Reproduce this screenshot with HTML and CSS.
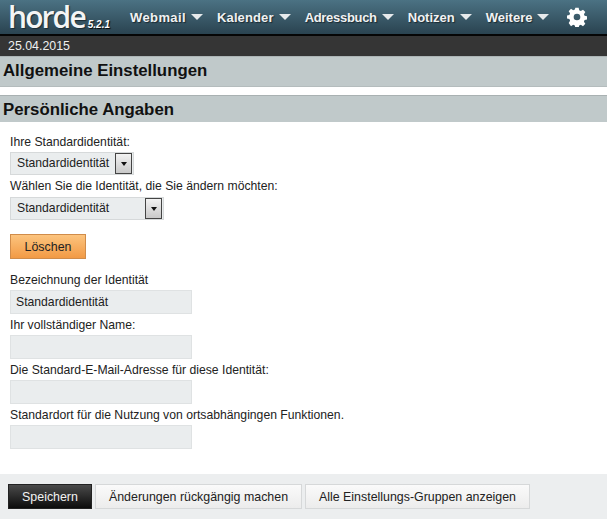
FILE: index.html
```html
<!DOCTYPE html>
<html lang="de">
<head>
<meta charset="utf-8">
<title>Allgemeine Einstellungen</title>
<link rel="stylesheet" href="styles.css">
</head>
<body>
<header class="topbar">
  <div class="logo"><span class="logo-word">horde</span><span class="logo-version">5.2.1</span></div>
  <nav class="menu">
    <a class="menu-item menu-wide">Webmail<i class="caret"></i></a>
    <a class="menu-item menu-slight">Kalender<i class="caret"></i></a>
    <a class="menu-item menu-tight">Adressbuch<i class="caret"></i></a>
    <a class="menu-item">Notizen<i class="caret"></i></a>
    <a class="menu-item">Weitere<i class="caret"></i></a>
  </nav>
  <svg class="gear" viewBox="0 0 24 24" width="20" height="20"><path fill="#fff" fill-rule="evenodd" d="M10 1h4l.6 3 2 .9 2.6-1.700 2.800 2.800-1.700 2.600.8 2 3 .6v3.800l-3 .6-.8 2 1.700 2.600-2.800 2.800-2.600-1.700-2 .9-.6 3h-4l-.6-3-2-.9-2.600 1.700L2 19.100l1.700-2.600-.8-2-3-.6v-3.800l3-.6.8-2L2 5l2.800-2.800 2.600 1.700 2-.9zM12 8a4 4 0 1 0 0 8 4 4 0 0 0 0-8z"/></svg>
</header>
<div class="datebar">25.04.2015</div>
<h1 class="band band-main">Allgemeine Einstellungen</h1>
<h2 class="band band-sub">Persönliche Angaben</h2>
<main class="form">
  <div class="label label-first">Ihre Standardidentität:</div>
  <div class="select select-short"><span class="select-text">Standardidentität</span><span class="select-btn"><i class="select-arrow"></i></span></div>
  <div class="label label-second">Wählen Sie die Identität, die Sie ändern möchten:</div>
  <div class="select select-long"><span class="select-text">Standardidentität</span><span class="select-btn"><i class="select-arrow"></i></span></div>
  <button class="btn btn-orange" type="button">Löschen</button>
  <div class="label label-field-first">Bezeichnung der Identität</div>
  <input class="field" type="text" value="Standardidentität">
  <div class="label">Ihr vollständiger Name:</div>
  <input class="field" type="text">
  <div class="label">Die Standard-E-Mail-Adresse für diese Identität:</div>
  <input class="field" type="text">
  <div class="label">Standardort für die Nutzung von ortsabhängingen Funktionen.</div>
  <input class="field" type="text">
</main>
<footer class="actions">
  <button class="btn btn-dark btn-save" type="button">Speichern</button>
  <button class="btn btn-light btn-undo" type="button">Änderungen rückgängig machen</button>
  <button class="btn btn-light btn-all" type="button">Alle Einstellungs-Gruppen anzeigen</button>
</footer>
</body>
</html>
```
FILE: styles.css
```css
* { box-sizing: border-box; }
html, body { margin: 0; padding: 0; }
body {
  width: 607px;
  height: 519px;
  overflow: hidden;
  background: #fff;
  color: #222;
  font-family: "Liberation Sans", Arial, sans-serif;
  font-size: 12.2px;
}
.topbar {
  height: 36px;
  display: flex;
  align-items: center;
  padding-left: 8px;
  border-bottom: 2px solid #050505;
  background: linear-gradient(#4b7283, #2a4350);
}
.logo { display: flex; align-items: baseline; width: 122px; flex: none; }
.logo-word {
  font-family: "Open Sans", sans-serif;
  font-size: 30px;
  font-weight: 600;
  line-height: 34px;
  letter-spacing: -1.9px;
  padding-right: 2px;
  color: #f4f5f5;
  text-shadow: 1px 1px 1px #1c2c34;
}
.logo-version {
  font-size: 10px;
  font-weight: bold;
  font-style: italic;
  color: #fff;
  margin-left: 1px;
  letter-spacing: 0;
  text-shadow: 1px 1px 1px #000;
}
.menu { display: flex; gap: 14px; }
.menu-item {
  display: flex;
  align-items: center;
  color: #f0f2f3;
  font-size: 13px;
  font-weight: bold;
  text-shadow: 1px 1px 1px #1a2a32;
}
.menu-wide { letter-spacing: 0.4px; }
.menu-slight { letter-spacing: 0.12px; }
.menu-tight { letter-spacing: -0.3px; }
.caret {
  width: 0;
  height: 0;
  margin-left: 5px;
  border-left: 6px solid transparent;
  border-right: 6px solid transparent;
  border-top: 6px solid #e6eaec;
}
.gear { margin-left: 18px; flex: none; }
.datebar {
  height: 20px;
  line-height: 20px;
  padding-left: 8px;
  background: #353535;
  color: #f0f0f0;
  font-size: 12.4px;
}
.band { margin: 0; color: #111; font-weight: bold; background: #c0c9ca; padding-left: 3px; font-size: 16.8px; }
.band-main {
  height: 31px;
  line-height: 27px;
  border-top: 1px solid #adb5b6;
  border-bottom: 1px solid #b4bcbd;
}
.band-sub {
  height: 27px;
  line-height: 28px;
  margin-top: 8px;
  border-top: 1px solid #a9b1b2;
}
.form { display: flex; flex-direction: column; align-items: flex-start; padding-left: 10px; height: 352px; }
.label { line-height: 14px; margin-top: 4px; color: #222; }
.label-first { margin-top: 13px; }
.label-field-first { margin-top: 14px; }
.select {
  display: flex;
  align-items: center;
  justify-content: space-between;
  height: 23px;
  margin-top: 3px;
  padding: 0 1px 0 6px;
  background: #eaedee;
  border: 1px solid #d6d9da;
}
.select-short { width: 124px; }
.select-long { width: 154px; margin-top: 4px; }
.select-text { line-height: 21px; }
.select-btn {
  display: flex;
  align-items: center;
  justify-content: center;
  width: 17px;
  height: 21px;
  background: linear-gradient(#f2f2f2, #c9c9c9);
  border: 1px solid #444;
}
.select-arrow {
  width: 0;
  height: 0;
  border-left: 3.5px solid transparent;
  border-right: 3.5px solid transparent;
  border-top: 4px solid #111;
}
.field {
  display: block;
  width: 182px;
  height: 24px;
  margin: 3px 0 0;
  padding: 0 5px;
  background: #eaedee;
  border: 1px solid #dfe2e3;
  font: inherit;
  color: #222;
}
.btn {
  height: 25px;
  padding: 0;
  font-family: inherit;
  font-size: 12.4px;
  cursor: pointer;
}
.btn-orange {
  width: 76px;
  margin-top: 14px;
  color: #222;
  background: linear-gradient(#fcc47e, #f29a45);
  border: 1px solid #d08c4a;
}
.actions {
  display: flex;
  align-items: flex-start;
  height: 45px;
  padding: 10px 0 0 8px;
  background: #eceeef;
}
.btn-dark {
  color: #f2f2f2;
  background: linear-gradient(#4a4a4a, #0c0c0c);
  border: 1px solid #222;
}
.btn-light {
  color: #222;
  background: linear-gradient(#fafafa, #ececec);
  border: 1px solid #d6d8d9;
}
.btn-save { width: 84px; }
.btn-undo { width: 207px; margin-left: 3px; }
.btn-all { width: 225px; margin-left: 3px; }
```
